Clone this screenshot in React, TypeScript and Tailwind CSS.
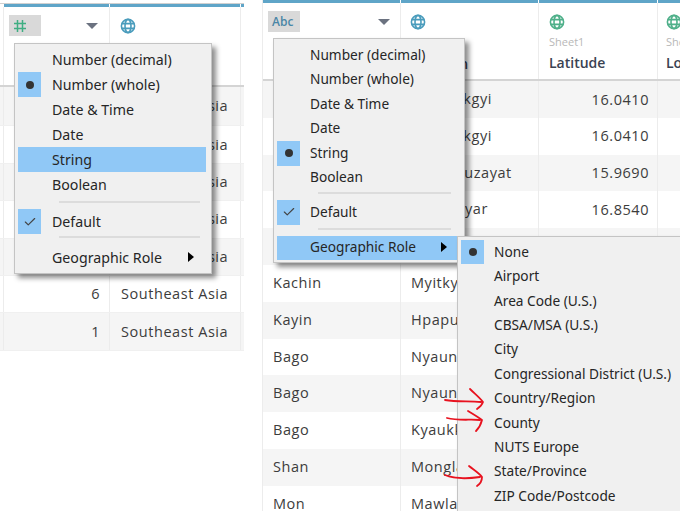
import React from 'react';
import { Check } from 'lucide-react';

const Globe = ({ color, className = '' }: { color: string; className?: string }) => (
  <svg width="16" height="16" viewBox="0 0 16 16" fill="none" stroke={color} strokeWidth="1.6" className={className}>
    <circle cx="8" cy="8" r="6.6" />
    <ellipse cx="8" cy="8" rx="3" ry="6.6" />
    <path d="M1.6 5.6h12.8M1.6 10.4h12.8" />
  </svg>
);

const Triangle = () => <div className="w-0 h-0 border-x-[6px] border-x-transparent border-t-[6px] border-t-[#6b7280]" />;

const Chip = ({ children }: { children: React.ReactNode }) => (
  <div className="w-[32px] h-[21px] bg-[#d9d9d9] flex items-center pl-[4px]">{children}</div>
);

const MenuRow = ({ label, mark, active, arrow, h, large }: { label: string; mark?: 'dot' | 'check'; active?: boolean; arrow?: boolean; h: string; large?: boolean }) => (
  <div className={`flex items-center ${h} ${active ? 'bg-[#90c8f6]' : ''}`}>
    <div className={`w-[23px] h-full shrink-0 flex items-center justify-center ${mark ? 'bg-[#90c8f6]' : ''}`}>
      {mark === 'dot' && <div className="w-[8px] h-[8px] rounded-full bg-[#333]" />}
      {mark === 'check' && <Check size={14} strokeWidth={2} className="text-[#444]" />}
    </div>
    <span className={`text-[#262626] whitespace-nowrap ${large ? 'ml-[11px] text-[14.2px]' : 'ml-[10px] text-[13.7px]'}`}>{label}</span>
    {arrow && <div className="absolute right-[17px] -mt-[2px] w-0 h-0 border-y-[5px] border-y-transparent border-l-[6px] border-l-black" />}
  </div>
);

const Separator = ({ className }: { className: string }) => <div className={`ml-[41px] mr-[6px] h-[2px] bg-[#dcdcdc] ${className}`} />;

const LEFT_ROWS = ['', '', '', '', '', '6', '1'];
const RIGHT_ROWS = [
  ['', 'Paingkikgyi', '16.0410'],
  ['', 'Paingkikgyi', '16.0410'],
  ['', 'Thanbyuzayat', '15.9690'],
  ['', 'Kyonhayar', '16.8540'],
  ['', '', ''],
  ['Kachin', 'Myitkyina', ''],
  ['Kayin', 'Hpapun', ''],
  ['Bago', 'Nyaunglebin', ''],
  ['Bago', 'Nyaungshwe', ''],
  ['Bago', 'Kyaukkyi', ''],
  ['Shan', 'Monglar', ''],
  ['Mon', 'Mawlamyine', ''],
];

const LeftTable = () => (
  <div className="w-[244px] shrink-0 pt-[3px]">
    <div className="flex gap-[1px] h-[4px] pl-[4px] border-t border-[#d0d0d0]">
      <div className="w-[105px] bg-[#5fa5c8]" />
      <div className="w-[130px] bg-[#5fa5c8]" />
      <div className="flex-1 bg-[#5fa5c8]" />
    </div>
    <div className="flex h-[80px] border-b-2 border-[#d4d4d4] pl-[3px]">
      <div className="w-[107px] border-x border-[#ececec] pl-[5px] pr-[11px] pt-[8px] flex justify-between">
        <Chip>
          <svg width="14" height="14" viewBox="0 0 14 14" stroke="#3fae82" strokeWidth="1.5">
            <path d="M4.5 1v12M9.5 1v12M1 4.5h12M1 9.5h12" />
          </svg>
        </Chip>
        <div className="pt-[8px]"><Triangle /></div>
      </div>
      <div className="w-[131px] border-r border-[#ececec] pl-[10px] pt-[11px]"><Globe color="#4a9cbc" /></div>
    </div>
    {LEFT_ROWS.map((value, i) => (
      <div key={i} className={`flex ${i === 0 ? 'h-[39.4px]' : 'h-[37.4px]'} pl-[3px] border-b border-[#f0f0f0] items-center text-[14.5px] tracking-[0.55px] text-[#3c3c3c] font-['Open_Sans',sans-serif] ${i % 2 === 0 ? 'bg-[#f5f5f5]' : 'bg-white'}`}>
        <div className="w-[107px] h-full flex items-center justify-end pr-[9px] border-x border-[#ececec]">{value}</div>
        <div className="w-[131px] h-full flex items-center pl-[11px] border-r border-[#ececec] whitespace-nowrap">Southeast Asia</div>
      </div>
    ))}
  </div>
);

const HeaderCol = ({ w, children, cls = '' }: { w: string; children?: React.ReactNode; cls?: string }) => (
  <div className={`${w} shrink-0 h-full border-r border-[#ececec] ${cls}`}>{children}</div>
);

const RightTable = () => (
  <div className="flex-1 min-w-0 ml-[18px] border-l border-[#ececec] overflow-hidden">
    <div className="flex gap-[1px] h-[3px]">
      <div className="w-[137px] bg-[#5fa5c8]" />
      <div className="w-[137px] bg-[#5fa5c8]" />
      <div className="w-[118px] bg-[#5fa5c8]" />
      <div className="flex-1 bg-[#5fa5c8]" />
    </div>
    <div className="flex h-[78px] border-b-2 border-[#d4d4d4]">
      <HeaderCol w="w-[138px]" cls="pl-[5px] pr-[10px] pt-[8px] flex justify-between">
        <Chip><span className="text-[12px] font-semibold text-[#4a86a6] font-['Open_Sans',sans-serif]">Abc</span></Chip>
        <div className="pt-[8px]"><Triangle /></div>
      </HeaderCol>
      <HeaderCol w="w-[138px]" cls="pl-[9px] pt-[11px]">
        <Globe color="#4a9cbc" />
        <div className="mt-[23px] text-[14px] font-semibold text-[#3a4252] font-['Open_Sans',sans-serif]">Location</div>
      </HeaderCol>
      <HeaderCol w="w-[119px]" cls="pl-[10px] pt-[11px]">
        <Globe color="#4fb08a" />
        <div className="mt-[4px] text-[11px] leading-[15px] text-[#b8b8b8] font-['Open_Sans',sans-serif]">Sheet1</div>
        <div className="mt-[3px] text-[14px] font-semibold text-[#3a4252] font-['Open_Sans',sans-serif]">Latitude</div>
      </HeaderCol>
      <div className="pl-[8px] pt-[11px] whitespace-nowrap">
        <Globe color="#4fb08a" />
        <div className="mt-[4px] text-[11px] leading-[15px] text-[#b8b8b8] font-['Open_Sans',sans-serif]">Sheet1</div>
        <div className="mt-[3px] text-[14px] font-semibold text-[#3a4252] font-['Open_Sans',sans-serif]">Longitude</div>
      </div>
    </div>
    {RIGHT_ROWS.map((row, i) => (
      <div key={i} className={`flex h-[36.8px] items-center text-[14.5px] tracking-[0.55px] text-[#3c3c3c] font-['Open_Sans',sans-serif] ${i % 2 === 0 ? 'bg-[#f5f5f5]' : 'bg-white'}`}>
        <div className="w-[138px] h-full flex items-center pl-[10px] pb-[1px] border-r border-[#ececec]">{row[0]}</div>
        <div className="w-[138px] h-full flex items-center pl-[10px] pb-[1px] border-r border-[#ececec] whitespace-nowrap">{row[1]}</div>
        <div className="w-[119px] h-full flex items-center justify-end pr-[8px] border-r border-[#ececec]">{row[2]}</div>
      </div>
    ))}
  </div>
);

const GEO_ROLES = ['None', 'Airport', 'Area Code (U.S.)', 'CBSA/MSA (U.S.)', 'City', 'Congressional District (U.S.)', 'Country/Region', 'County', 'NUTS Europe', 'State/Province', 'ZIP Code/Postcode'];
const menuClass = "absolute bg-[#f0f0f0] border border-[#c4c4c4] shadow-[4px_4px_5px_rgba(0,0,0,0.45)] font-['Noto_Sans',sans-serif]";

export default function App() {
  return (
    <div className="relative w-[680px] h-[511px] overflow-hidden bg-white flex">
      <LeftTable />
      <RightTable />

      {/* left type menu */}
      <div className={`${menuClass} left-[14px] top-[43px] w-[198px] h-[231px] pt-[3px] pl-[3px] pr-[5px]`}>
        <MenuRow large h="h-[25px]" label="Number (decimal)" />
        <MenuRow large h="h-[25px]" label="Number (whole)" mark="dot" />
        <MenuRow large h="h-[25px]" label="Date & Time" />
        <MenuRow large h="h-[25px]" label="Date" />
        <MenuRow large h="h-[25px]" label="String" active />
        <MenuRow large h="h-[25px]" label="Boolean" />
        <Separator className="mt-[4px] mb-[6px]" />
        <MenuRow large h="h-[25px]" label="Default" mark="check" />
        <Separator className="mt-[2px] mb-[7px]" />
        <MenuRow large h="h-[25px]" label="Geographic Role" arrow />
      </div>

      {/* right type menu */}
      <div className={`${menuClass} left-[273px] top-[38px] w-[192px] h-[225px] pt-[4px] pl-[3px] pr-[7px]`}>
        <MenuRow h="h-[24.5px]" label="Number (decimal)" />
        <MenuRow h="h-[24.5px]" label="Number (whole)" />
        <MenuRow h="h-[24.5px]" label="Date & Time" />
        <MenuRow h="h-[24.5px]" label="Date" />
        <MenuRow h="h-[24.5px]" label="String" mark="dot" />
        <MenuRow h="h-[24.5px]" label="Boolean" />
        <Separator className="mt-[2px] mb-[6px]" />
        <MenuRow h="h-[24.5px]" label="Default" mark="check" />
        <Separator className="mt-[3px] mb-[6px]" />
        <MenuRow h="h-[24.5px]" label="Geographic Role" active arrow />
      </div>

      {/* geographic role submenu */}
      <div className={`${menuClass} left-[457px] top-[236px] w-[240px] h-[290px] pt-[3px] pl-[3px]`}>
        {GEO_ROLES.map((role, i) => (
          <MenuRow key={role} h="h-[24.4px]" label={role} mark={i === 0 ? 'dot' : undefined} />
        ))}
      </div>

      {/* red annotation arrows */}
      <svg className="absolute left-0 top-0 pointer-events-none" width="680" height="511" fill="none" stroke="#e8121f" strokeWidth="1.8" strokeLinecap="round" strokeLinejoin="round">
        <path d="M445 400C456 402 468 401 481 402M470 389C475 394 480 398 483 402C482 405 480 407 477 409" />
        <path d="M447 418C458 421 470 419 480 420M468 411C473 414 478 417 482 420C481 424 479 428 476 431" />
        <path d="M445 475C452 478 466 479 480 477M469 466C474 470 479 473 482 477C482 480 480 484 477 486" />
      </svg>
    </div>
  );
}
